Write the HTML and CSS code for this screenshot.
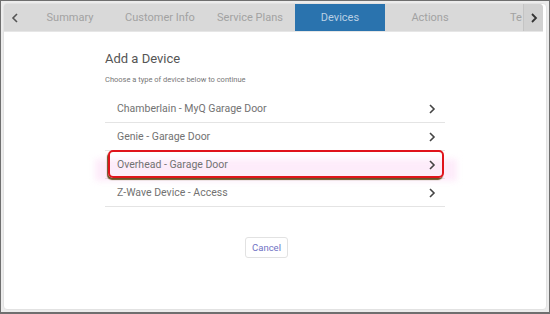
FILE: index.html
```html
<!DOCTYPE html>
<html lang="en">
<head>
    <meta charset="UTF-8">
    <meta name="viewport" content="width=device-width, initial-scale=1.0">
    <title>Add a Device</title>
    <link rel="stylesheet" href="styles.css">
</head>
<body>
    <div class="card">
        <nav class="tabs">
            <button class="tab-arrow left">
                <svg width="8" height="10" viewBox="0 0 8 10"><path d="M6 1 L2 5 L6 9" fill="none" stroke="#555" stroke-width="1.6"/></svg>
            </button>
            <div class="tab-list">
                <span class="tab">Summary</span>
                <span class="tab">Customer Info</span>
                <span class="tab">Service Plans</span>
                <span class="tab active">Devices</span>
                <span class="tab">Actions</span>
                <span class="tab last">Te</span>
            </div>
            <button class="tab-arrow right">
                <svg width="8" height="10" viewBox="0 0 8 10"><path d="M2 1 L6 5 L2 9" fill="none" stroke="#333" stroke-width="1.8"/></svg>
            </button>
        </nav>

        <main class="content">
            <h2>Add a Device</h2>
            <p class="hint">Choose a type of device below to continue</p>

            <ul class="device-list">
                <li class="device">
                    <span>Chamberlain - MyQ Garage Door</span>
                    <svg class="chev" width="8" height="10" viewBox="0 0 8 10"><path d="M2 1 L6 5 L2 9" fill="none" stroke="#444" stroke-width="1.6"/></svg>
                </li>
                <li class="device">
                    <span>Genie - Garage Door</span>
                    <svg class="chev" width="8" height="10" viewBox="0 0 8 10"><path d="M2 1 L6 5 L2 9" fill="none" stroke="#444" stroke-width="1.6"/></svg>
                </li>
                <li class="device marked">
                    <span>Overhead - Garage Door</span>
                    <svg class="chev" width="8" height="10" viewBox="0 0 8 10"><path d="M2 1 L6 5 L2 9" fill="none" stroke="#444" stroke-width="1.6"/></svg>
                </li>
                <li class="device">
                    <span>Z-Wave Device - Access</span>
                    <svg class="chev" width="8" height="10" viewBox="0 0 8 10"><path d="M2 1 L6 5 L2 9" fill="none" stroke="#444" stroke-width="1.6"/></svg>
                </li>
            </ul>

            <div class="actions">
                <button class="cancel">Cancel</button>
            </div>
        </main>
    </div>
</body>
</html>
```

FILE: styles.css
```css
:root {
    --tab-bg: #d9d9d9;
    --tab-text: #a2a2a2;
    --active: #2a73ae;
    --line: #e4e4e4;
    --text: #727272;
}

* {
    box-sizing: border-box;
}

html, body {
    margin: 0;
    height: 314px;
}

body {
    font-family: Roboto, "Liberation Sans", sans-serif;
    border: 1px solid #6f6f6f;
    border-bottom-width: 2px;
    background-color: #ececec;
    padding: 2px;
    overflow: hidden;
}

.card {
    height: 100%;
    background-color: #fff;
    border: 1px solid #e2e2e2;
    border-radius: 4px;
    overflow: hidden;
}

.tabs {
    display: flex;
    height: 28px;
    margin-right: 3px;
    background-color: var(--tab-bg);
    border-bottom: 1px solid #e6e6e6;
    border-top-right-radius: 4px;
}

.tab-arrow {
    flex: none;
    display: flex;
    align-items: center;
    justify-content: center;
    border: none;
    padding: 0;
    background-color: var(--tab-bg);
}

.tab-arrow.left {
    width: 21px;
}

.tab-arrow.right {
    width: 20px;
    background-color: #d1d1d1;
    border-left: 1px solid #c4c4c4;
    border-top-right-radius: 4px;
}

.tab-list {
    flex: 1;
    display: flex;
    overflow: hidden;
}

.tab {
    flex: none;
    width: 90px;
    display: flex;
    align-items: center;
    justify-content: center;
    font-size: 11px;
    color: var(--tab-text);
}

.tab.last {
    width: auto;
    padding-left: 35px;
}

.tab.active {
    background-color: var(--active);
    color: #b9d0e4;
}

.content {
    width: 340px;
    margin: 0 auto;
    padding-top: 19px;
}

h2 {
    margin: 0;
    font-size: 13px;
    font-weight: 400;
    color: #555;
}

.hint {
    margin: 9px 0 11px;
    font-size: 7.5px;
    color: #777;
}

.device-list {
    list-style: none;
    margin: 0;
    padding: 0;
}

.device {
    position: relative;
    display: flex;
    align-items: center;
    justify-content: space-between;
    height: 28px;
    padding: 0 9px 0 12px;
    border-bottom: 1px solid var(--line);
    font-size: 10.5px;
    color: var(--text);
}

.device.marked::before {
    content: "";
    position: absolute;
    left: -10px;
    right: -12px;
    top: 8px;
    bottom: -3px;
    background-color: rgba(250, 200, 240, 0.35);
    filter: blur(3px);
}

.device.marked::after {
    content: "";
    position: absolute;
    left: 3px;
    right: 1px;
    top: -1px;
    bottom: 0;
    border: 2px solid #e0141b;
    border-radius: 5px;
    box-shadow: -1px 2px 1px #6b5124;
}

.device span, .device .chev {
    position: relative;
}

.actions {
    display: flex;
    justify-content: center;
    padding-top: 30px;
    padding-right: 17px;
}

.cancel {
    width: 43px;
    height: 21px;
    padding: 0;
    font-family: inherit;
    font-size: 9.5px;
    color: #6f72c4;
    background-color: #fff;
    border: 1px solid #e2e2e2;
    border-radius: 3px;
}
```
